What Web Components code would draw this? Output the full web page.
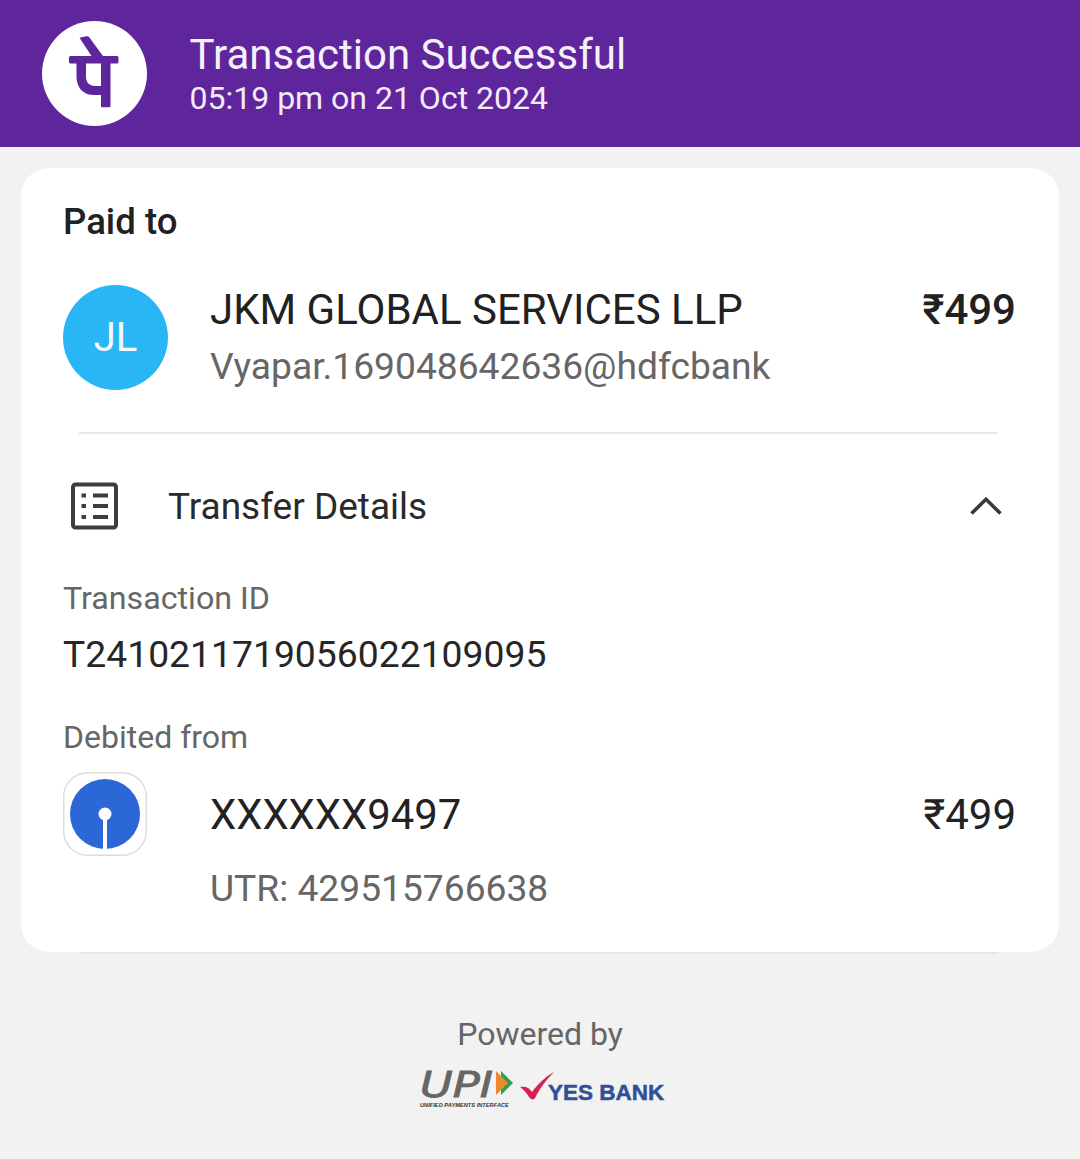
<!DOCTYPE html>
<html>
<head>
<meta charset="utf-8">
<title>Transaction Successful</title>
<style>
  html,body{ margin:0; padding:0; background:#f2f2f2; }
  body{ font-family:Roboto,"Liberation Sans",sans-serif; width:1080px; height:1159px; overflow:hidden; }
</style>
</head>
<body>
<pp-header title-text="Transaction Successful" sub-text="05:19 pm on 21 Oct 2024"></pp-header>
<pp-card>
  <pp-label strong>Paid to</pp-label>
  <pp-party main="JKM GLOBAL SERVICES LLP" sub="Vyapar.169048642636@hdfcbank" amount="₹499" bold>
    <pp-avatar slot="icon">JL</pp-avatar>
  </pp-party>
  <pp-divider></pp-divider>
  <pp-section>Transfer Details</pp-section>
  <pp-field label="Transaction ID" value="T2410211719056022109095"></pp-field>
  <pp-debit>
    <pp-bank slot="icon"></pp-bank>
  </pp-debit>
</pp-card>
<pp-footer></pp-footer>

<script>
(function(){
  // small helper: every element gets an open shadow root from a string
  function define(name, html, setup){
    customElements.define(name, class extends HTMLElement {
      constructor(){
        super();
        this.attachShadow({mode:'open'}).innerHTML = html;
      }
      connectedCallback(){ if (setup) setup(this, this.shadowRoot); }
    });
  }
  const text = (root, sel, val) => { root.querySelector(sel).textContent = val || ''; };

  define('pp-header', `
    <style>
      :host{ display:flex; align-items:center; height:147px; background:#5f259c; color:#fff; padding-left:42px; box-sizing:border-box; }
      .logo{ width:105px; height:105px; flex:none; display:block; }
      .txt{ margin-left:42.500px; display:flex; flex-direction:column; margin-top:0; }
      .t{ font-size:42px; line-height:50px; color:#f6f0fb; }
      .s{ font-size:32px; line-height:38px; color:#f3ecf8; margin-top:-1px; }
    </style>
    <svg class="logo" viewBox="0 0 105 105">
      <circle cx="52.500" cy="52.500" r="52.500" fill="#fff"/>
      <g fill="#5f259c">
        <path d="M37.500 16.800l7-1.600c1.200-.2 2 .2 2.700 1.100L61 35H49.500z"/>
        <rect x="27" y="35" width="49.500" height="7.500" rx="1.500"/>
        <path d="M59 42h9.500v43c0 .8-.5 1.300-1.300 1.300h-6.900c-.8 0-1.300-.5-1.300-1.300z"/>
        <path d="M34.500 42H44v13.500c0 6 3.500 9.500 9 9.500h6v9h-7c-11 0-17.500-7.500-17.500-18.500z"/>
      </g>
    </svg>
    <div class="txt"><div class="t"></div><div class="s"></div></div>
  `, (el, r) => {
    text(r, '.t', el.getAttribute('title-text'));
    text(r, '.s', el.getAttribute('sub-text'));
  });

  define('pp-card', `
    <style>
      :host{ display:flex; flex-direction:column; margin:21px 21px 0; height:784px; box-sizing:border-box; background:#fff; border-radius:28px; padding:31px 43px 0 42px; }
    </style>
    <slot></slot>
  `);

  define('pp-label', `
    <style>
      :host{ display:block; font-size:36.600px; line-height:46px; color:#212121; font-weight:500; }
    </style>
    <slot></slot>
  `);

  define('pp-avatar', `
    <style>
      :host{ display:flex; width:105px; height:105px; border-radius:50%; background:#29b6f6; color:#f4fbff; align-items:center; justify-content:center; font-size:40px; }
    </style>
    <slot></slot>
  `);

  define('pp-party', `
    <style>
      :host{ display:flex; margin-top:40px; height:105px; color:#212121; }
      .icon{ width:105px; flex:none; }
      .mid{ flex:1; margin-left:42px; min-width:0; }
      .main{ font-size:42px; line-height:48px; margin-top:1px; white-space:nowrap; }
      .sub{ font-size:37.200px; line-height:44px; color:#666; margin-top:10px; white-space:nowrap; }
      .amt{ font-size:42px; line-height:48px; margin-top:1px; font-weight:500; }
    </style>
    <div class="icon"><slot name="icon"></slot></div>
    <div class="mid"><div class="main"></div><div class="sub"></div></div>
    <div class="amt"></div>
  `, (el, r) => {
    text(r, '.main', el.getAttribute('main'));
    text(r, '.sub', el.getAttribute('sub'));
    text(r, '.amt', el.getAttribute('amount'));
  });

  define('pp-divider', `
    <style>
      :host{ display:block; height:2px; background:#e8e8e8; margin:42px 19px 0 16px; }
    </style>
  `);

  define('pp-section', `
    <style>
      :host{ display:flex; align-items:center; height:72px; margin-top:36px; color:#2a2a2a; font-size:37px; }
      svg{ display:block; flex:none; }
      .ic{ width:48px; height:48px; margin-left:7px; }
      .lbl{ flex:1; margin-left:50px; }
      .ch{ width:32px; height:18px; margin-right:14px; }
    </style>
    <svg class="ic" viewBox="0 0 48 48" fill="none" stroke="#3d3d3d" stroke-width="4">
      <rect x="3" y="2.500" width="43" height="43" rx="2.500"/>
      <path stroke-width="3.800" d="M11.500 13.500h4.500M23 13.500h15M11.500 24h4.500M23 24h15M11.500 35h4.500M23 35h15"/>
    </svg>
    <div class="lbl"><slot></slot></div>
    <svg class="ch" viewBox="0 0 32 18" fill="none" stroke="#3a3a3a" stroke-width="3.600">
      <path d="M1.500 16.500L16 2.300l14.500 14.200"/>
    </svg>
  `);

  define('pp-field', `
    <style>
      :host{ display:block; margin-top:36px; }
      .l{ font-size:32.200px; line-height:40px; color:#666; }
      .v{ font-size:37.300px; line-height:44px; color:#262626; margin-top:14px; }
    </style>
    <div class="l"></div>
    <div class="v"></div>
  `, (el, r) => {
    text(r, '.l', el.getAttribute('label'));
    text(r, '.v', el.getAttribute('value'));
  });

  define('pp-bank', `
    <style>
      :host{ display:block; width:84px; height:84px; }
      svg{ display:block; }
    </style>
    <svg width="84" height="84" viewBox="0 0 84 84">
      <rect x=".7" y=".7" width="82.600" height="82.600" rx="24" fill="#fff" stroke="#dcdcdc" stroke-width="1.400"/>
      <circle cx="42" cy="42" r="35" fill="#2b67d6"/>
      <rect x="40" y="42" width="4" height="36" fill="#fff"/>
      <circle cx="42" cy="42" r="6.500" fill="#fff"/>
    </svg>
  `);

  define('pp-debit', `
    <style>
      :host{ display:block; margin-top:41px; color:#222; }
      .l{ font-size:32px; line-height:40px; color:#666; }
      .row{ display:flex; margin-top:15px; }
      .icon{ width:84px; flex:none; }
      .mid{ flex:1; margin-left:63px; }
      .a{ font-size:41.800px; line-height:48px; margin-top:19px; }
      .u{ font-size:37.200px; line-height:44px; color:#666; margin-top:27px; }
      .amt{ font-size:42px; line-height:48px; margin-top:19px; }
    </style>
    <div class="l">Debited from</div>
    <div class="row">
      <div class="icon"><slot name="icon"></slot></div>
      <div class="mid"><div class="a">XXXXXX9497</div><div class="u">UTR: 429515766638</div></div>
      <div class="amt">₹499</div>
    </div>
  `);

  define('pp-footer', `
    <style>
      :host{ display:block; text-align:center; }
      .rule{ height:2px; background:#e6e6e6; margin:0 82px 0 79px; }
      .p{ font-size:32px; line-height:40px; color:#666; margin-top:60px; }
      .logos{ display:flex; width:246px; height:40px; margin:17px 0 0 420px; text-align:left; }
      .upi{ width:95px; flex:none; }
      .mark{ display:flex; height:28px; }
      .word{ width:75px; flex:none; font:italic 400 35px/28px "DejaVu Sans",sans-serif; color:#666; -webkit-text-stroke:.8px #666; white-space:nowrap; transform:scaleX(1.28); transform-origin:0 50%; }
      .tri{ display:block; flex:none; margin-top:0; }
      .small{ font:italic 700 5.700px/8px "Liberation Sans",sans-serif; color:#333; margin-top:2px; white-space:nowrap; }
      .check{ display:block; flex:none; margin:0 0 0 5px; }
      .yes{ flex:none; margin:8px 0 0 -6px; font:700 22.500px/28px "Liberation Sans",sans-serif; color:#2f4f97; -webkit-text-stroke:.5px #2f4f97; white-space:nowrap; }
    </style>
    <div class="rule"></div>
    <div class="p">Powered by</div>
    <div class="logos">
      <div class="upi">
        <div class="mark">
          <div class="word">UPI</div>
          <svg class="tri" width="18" height="24" viewBox="0 0 18 24">
            <polygon points="6,0 18,12 6,24" fill="#2f9e4f"/>
            <polygon points="1,0 13,12 1,24" fill="#e98a2d"/>
          </svg>
        </div>
        <div class="small">UNIFIED PAYMENTS INTERFACE</div>
      </div>
      <svg class="check" width="34" height="30" viewBox="0 0 34 30">
        <path d="M0 16c5-1 9 0 12 5C18 13 25 6 34 1 26 9 20 17 15 27c-1 2-4 2-6-1-2-4-5-7-9-10z" fill="#d6204f"/>
      </svg>
      <div class="yes">YES BANK</div>
    </div>
  `);
})();
</script>
</body>
</html>
